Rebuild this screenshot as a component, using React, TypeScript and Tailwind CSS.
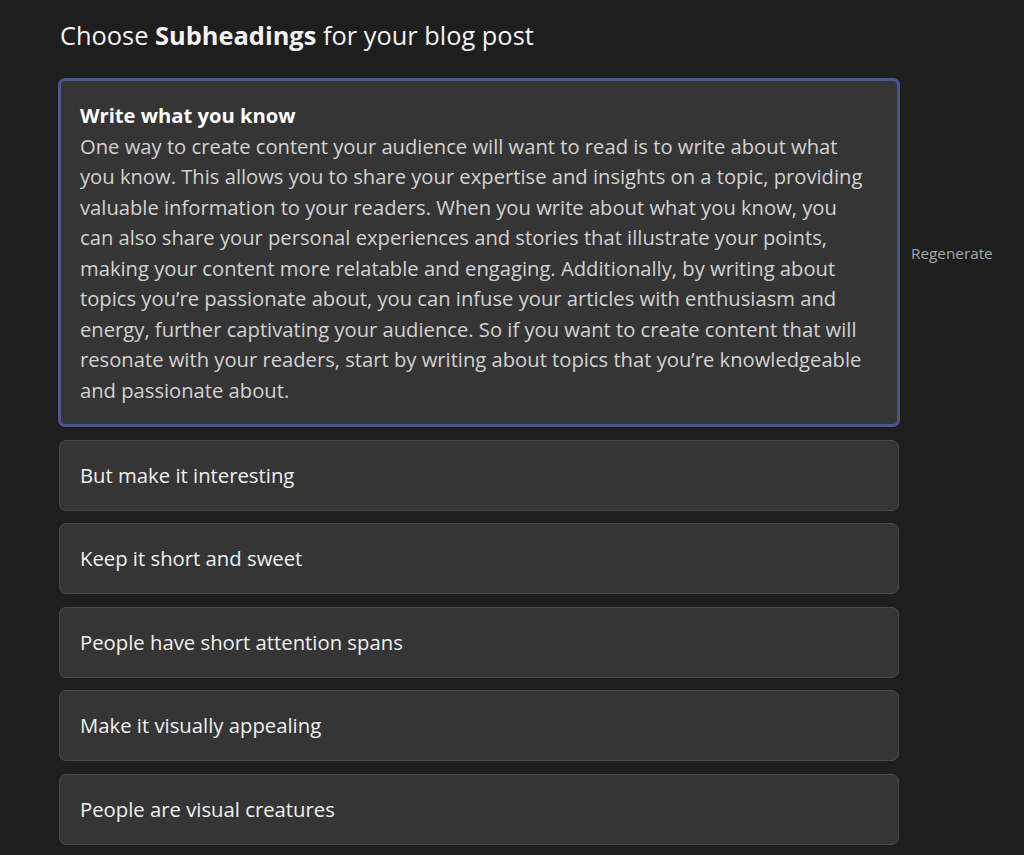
const items = [
  'But make it interesting',
  'Keep it short and sweet',
  'People have short attention spans',
  'Make it visually appealing',
  'People are visual creatures',
];

const body = [
  'One way to create content your audience will want to read is to write about what',
  'you know. This allows you to share your expertise and insights on a topic, providing',
  'valuable information to your readers. When you write about what you know, you',
  'can also share your personal experiences and stories that illustrate your points,',
  'making your content more relatable and engaging. Additionally, by writing about',
  'topics you’re passionate about, you can infuse your articles with enthusiasm and',
  'energy, further captivating your audience. So if you want to create content that will',
  'resonate with your readers, start by writing about topics that you’re knowledgeable',
  'and passionate about.',
];

export default function App() {
  return (
    <div
      className="relative min-h-[855px] w-full bg-[#1e1e1e] pl-[58px] pt-[17px] text-[#e6e6e6]"
      style={{ fontFamily: '"Open Sans", sans-serif' }}
    >
      <h1 className="pl-[2px] text-[25.4px] leading-[36px] font-normal text-[#f2f2f2]">
        Choose <span className="font-bold">Subheadings</span> for your blog post
      </h1>

      <div className="mt-[25px] flex w-[842px] flex-col gap-[12.5px]">
        <div className="rounded-[7px] border-[3px] border-[#4a5592] bg-[#353535] pb-[19px] pl-[19px] pr-[10px] pt-[19px]">
          <div className="text-[20.2px] leading-[30.5px] font-bold text-white">Write what you know</div>
          <p className="text-[20.2px] leading-[30.5px] whitespace-nowrap text-[#d2d2d2]">
            {body.map((l) => (
              <span key={l} className="block">
                {l}
              </span>
            ))}
          </p>
        </div>
        {items.map((t) => (
          <div
            key={t}
            className="ml-[1px] flex h-[71px] w-[840px] items-center rounded-[7px] border border-[#4a4a4a] bg-[#353535] pl-[20px] text-[20.3px] text-[#f0f0f0]"
          >
            {t}
          </div>
        ))}
      </div>
      <div className="absolute left-[911px] top-[242px] text-[15.3px] text-[#a8a8a8]">Regenerate</div>
    </div>
  );
}
